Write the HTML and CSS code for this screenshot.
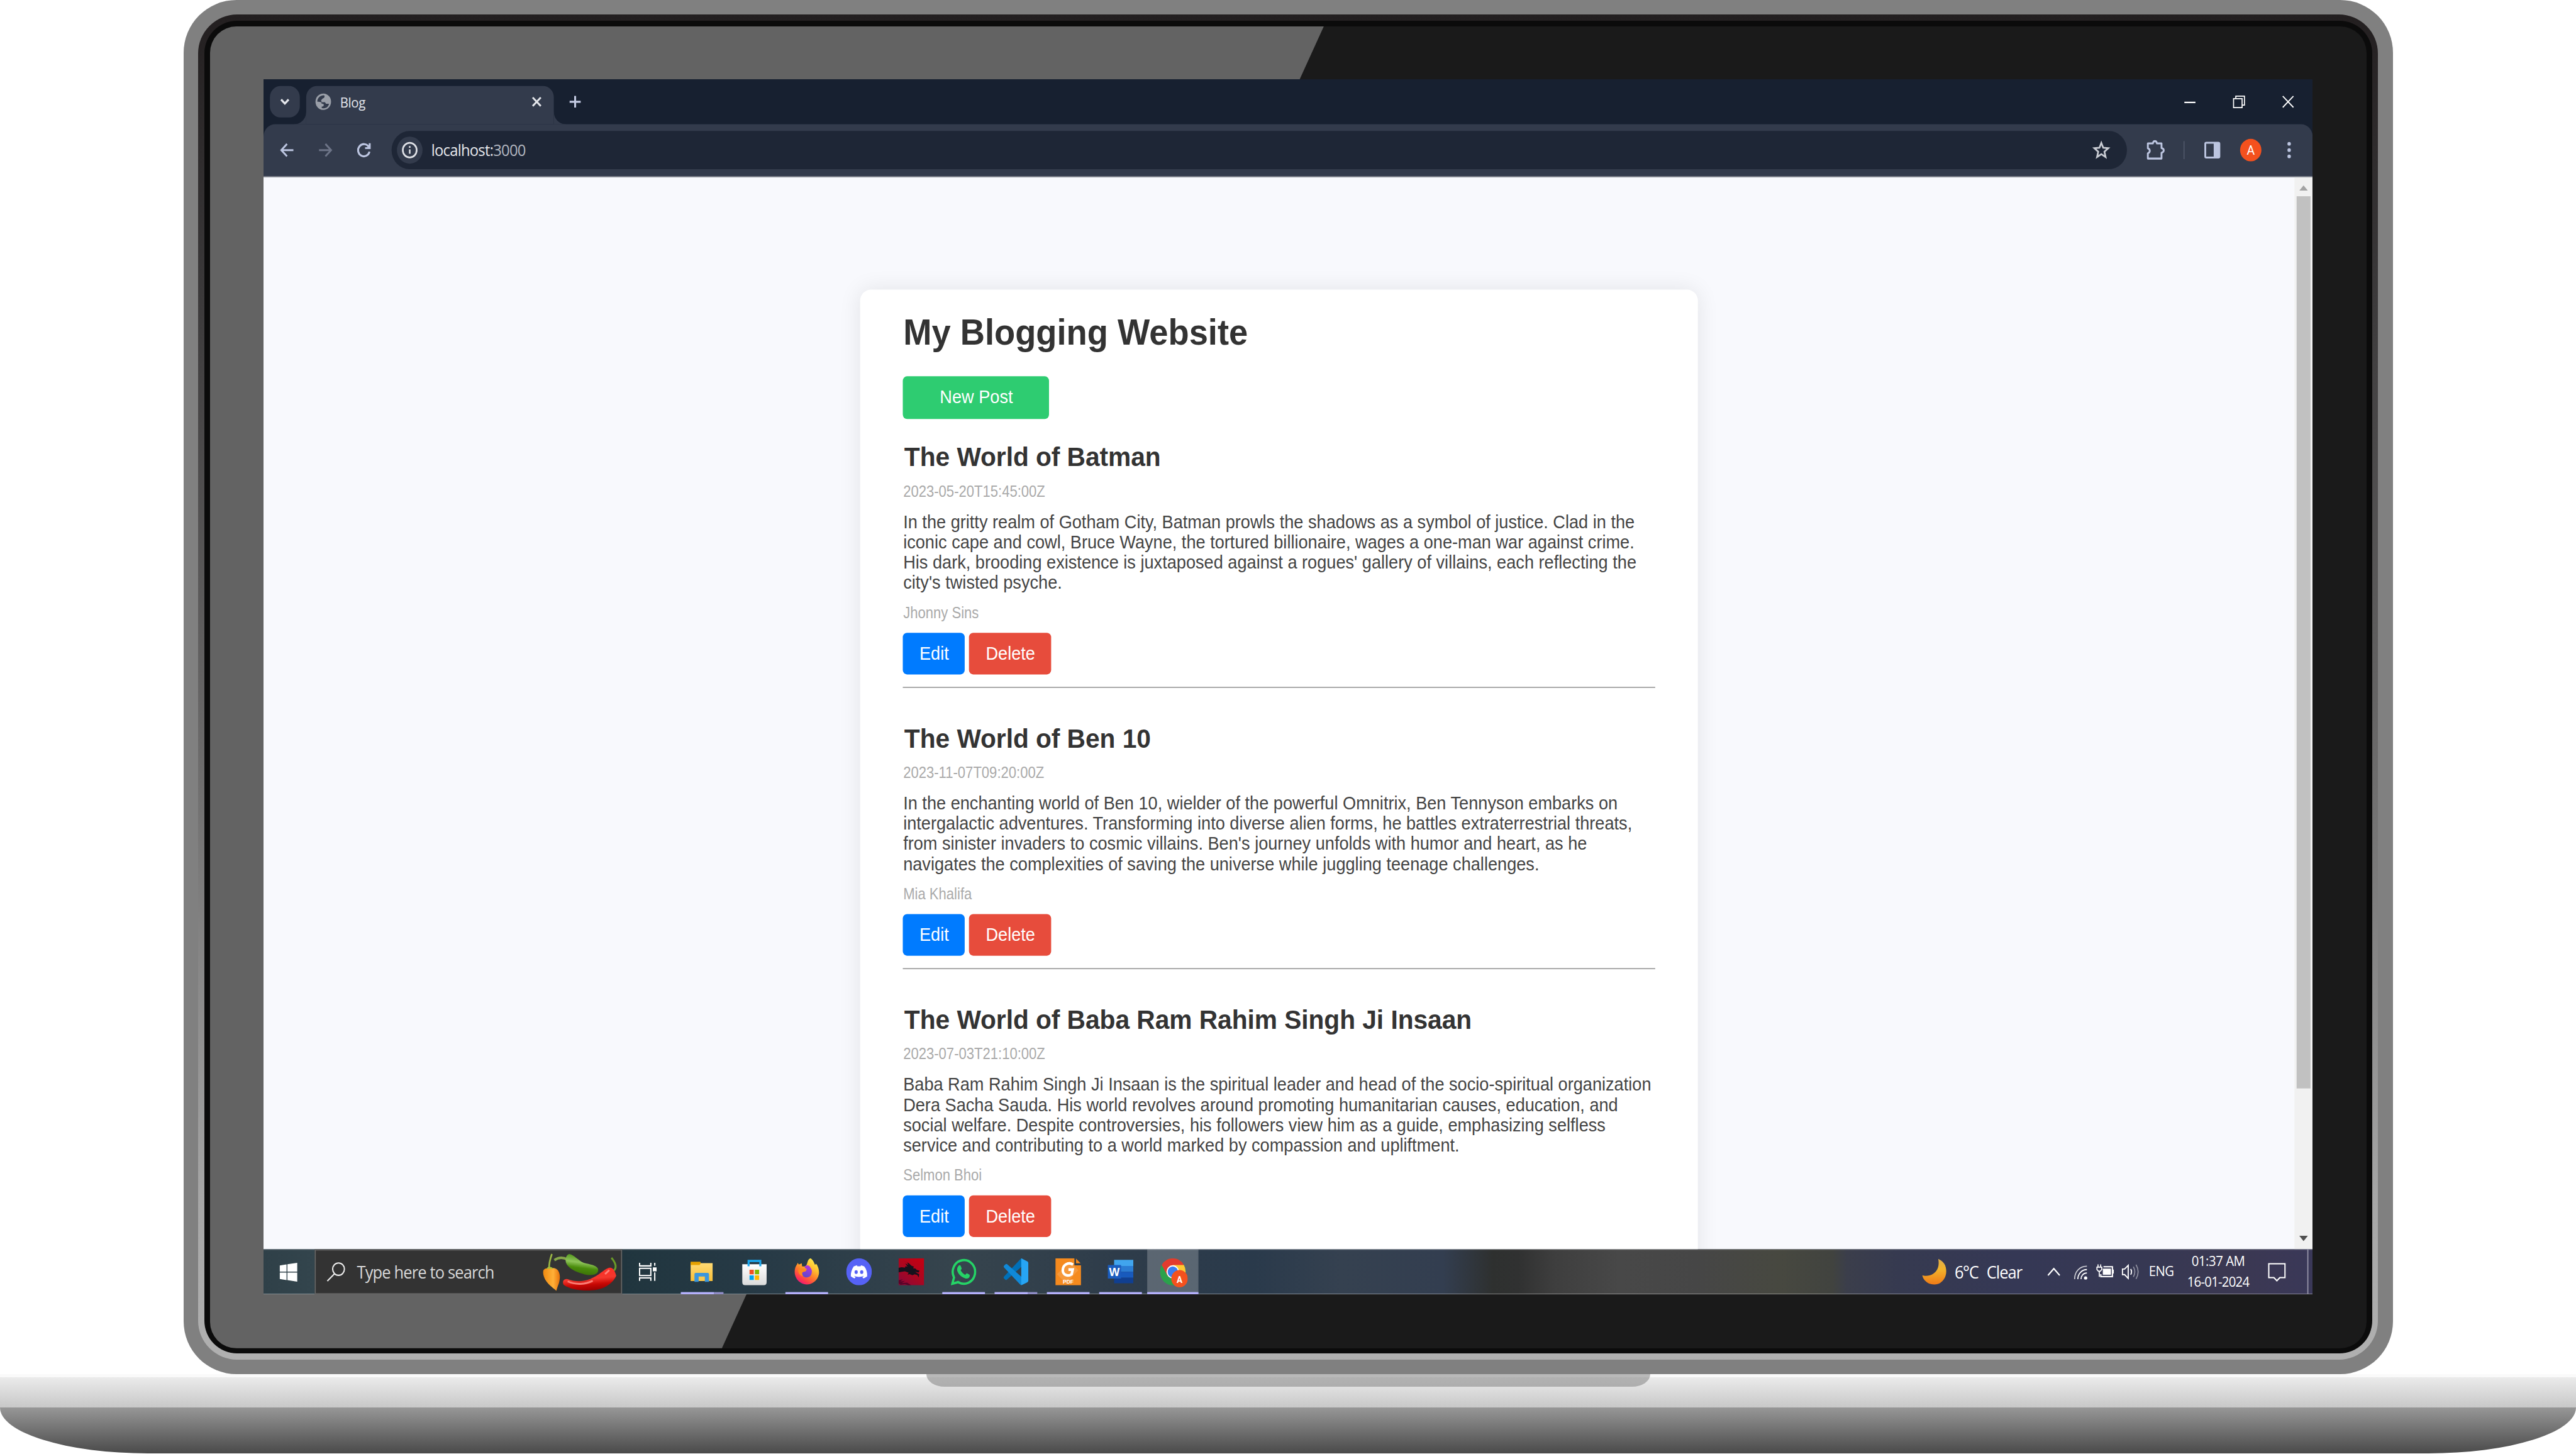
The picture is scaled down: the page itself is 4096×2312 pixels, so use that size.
FILE: index.html
```html
<!DOCTYPE html>
<html lang="en">
<head>
<meta charset="utf-8">
<title>Blog</title>
<link rel="stylesheet" href="styles.css">
</head>
<body>
<div class="laptop">
  <div class="lid"><div class="rim"><div class="bezel"><div class="glass">
    <div class="screen"><div class="desktop">

      <header class="tabstrip">
        <button class="tab-search"><svg width="28" height="28" viewBox="0 0 28 28"><path d="M10.500 12l3.500 3.600 3.500-3.600" fill="none" stroke="#e3e5ea" stroke-width="1.900"/></svg></button>
        <div class="tab">
          <svg class="globe" width="16" height="16" viewBox="0 0 16 16"><circle cx="8" cy="8" r="7.300" fill="#9a9fa8"/><path d="M8.800 2.200C5.500 2 2.600 4.500 2.300 7.800L5.400 8.200C6.800 8.300 6.600 7.300 5.600 6.500 7 6.500 6.600 5.200 8 4.900 9.300 4.300 9.500 3 8.800 2.200ZM5.800 8.400H9.300C10.200 8.400 9.900 9.800 11 9.800H13.300C13 12 11.300 13.700 8.300 13.900L6.600 13.700 6.500 12.300C8 12.500 8.800 11.300 8.400 10.200 7.600 9.900 6 9.700 5.800 8.400Z" fill="#333b4c"/></svg>
          <span class="tab-title">Blog</span>
          <svg class="tab-close" width="10" height="10" viewBox="0 0 10 10"><path d="M1.200 1.200l7.600 7.600M8.800 1.200L1.200 8.800" stroke="#e3e5ea" stroke-width="1.700"/></svg>
        </div>
        <svg class="new-tab" width="12" height="12" viewBox="0 0 12 12"><path d="M6 .8v10.400M.8 6h10.400" stroke="#c3cae2" stroke-width="1.800"/></svg>
        <div class="window-controls">
          <svg width="12" height="12" viewBox="0 0 12 12"><path d="M.8 6.600h10.400" stroke="#fff" stroke-width="1.200"/></svg>
          <svg width="12" height="12" viewBox="0 0 12 12"><path d="M.9 3.200h8v8h-8zM3 3V1h8.100v8H9" fill="none" stroke="#fff" stroke-width="1"/></svg>
          <svg width="12" height="12" viewBox="0 0 12 12"><path d="M1 1l10 10M11 1L1 11" stroke="#fff" stroke-width="1.100"/></svg>
        </div>
      </header>

      <nav class="toolbar">
        <svg class="nav-icon" width="16" height="16" viewBox="0 0 16 16"><path d="M14 8H3M8 2.500L2.700 8 8 13.500" fill="none" stroke="#bcc5e0" stroke-width="1.700"/></svg>
        <svg class="nav-icon" width="16" height="16" viewBox="0 0 16 16"><path d="M2 8h11M8 2.500L13.300 8 8 13.500" fill="none" stroke="#6d7487" stroke-width="1.700"/></svg>
        <svg class="nav-icon" width="16" height="16" viewBox="0 0 16 16"><path d="M13.300 9.300A5.400 5.400 0 1 1 12.600 5.200M13.500 1.900v4.300H9.200" fill="none" stroke="#bcc5e0" stroke-width="1.800"/></svg>
        <div class="omnibox">
          <span class="site-info"><svg width="16" height="16" viewBox="0 0 16 16"><circle cx="8" cy="8" r="6.500" fill="none" stroke="#dfe1e6" stroke-width="1.600"/><path d="M8 7.300v4M8 4.400v1.500" stroke="#dfe1e6" stroke-width="1.500"/></svg></span>
          <span class="url">localhost:<span class="port">3000</span></span>
          <svg class="star" width="18" height="18" viewBox="0 0 18 18"><path d="M9 2.600l1.800 4.300 4.700.4-3.600 3.100 1.100 4.700L9 12.600l-4 2.500 1.100-4.700-3.600-3.100 4.700-.4z" fill="none" stroke="#c9ccd3" stroke-width="1.600"/></svg>
        </div>
        <svg class="puzzle" width="18" height="18" viewBox="0 0 18 18"><path d="M1.600 3h4.700q.4-2 1.900-2t1.900 2h4.300v4.200q2.100.5 2.100 2t-2.100 2.200v5.100H1.600v-4.600c2.400-1 2.400-3.700 0-4.500z" fill="none" stroke="#bcc5e0" stroke-width="1.700" stroke-linejoin="round"/></svg>
        <i class="divider"></i>
        <svg class="side-panel" width="16" height="16" viewBox="0 0 16 16"><rect x="1.400" y="1.400" width="13.200" height="13.200" rx="1" fill="none" stroke="#bcc5e0" stroke-width="1.700"/><path d="M9.300 1h5.200v14H9.300z" fill="#bcc5e0"/></svg>
        <span class="avatar">A</span>
        <svg class="menu" width="4" height="16" viewBox="0 0 4 16"><g fill="#bcc5e0"><circle cx="2" cy="2.400" r="1.600"/><circle cx="2" cy="8" r="1.600"/><circle cx="2" cy="13.600" r="1.600"/></g></svg>
      </nav>

      <div class="viewport">
        <main class="page">
          <section class="card">
            <h1>My Blogging Website</h1>
            <button class="btn new-post">New Post</button>
            <article class="post">
              <h2>The World of Batman</h2>
              <small class="date">2023-05-20T15:45:00Z</small>
              <p>In the gritty realm of Gotham City, Batman prowls the shadows as a symbol of justice. Clad in the<br>iconic cape and cowl, Bruce Wayne, the tortured billionaire, wages a one-man war against crime.<br>His dark, brooding existence is juxtaposed against a rogues' gallery of villains, each reflecting the<br>city's twisted psyche.</p>
              <small class="author">Jhonny Sins</small>
              <div class="actions"><button class="btn edit">Edit</button><button class="btn delete">Delete</button></div>
            </article>
            <article class="post">
              <h2>The World of Ben 10</h2>
              <small class="date">2023-11-07T09:20:00Z</small>
              <p>In the enchanting world of Ben 10, wielder of the powerful Omnitrix, Ben Tennyson embarks on<br>intergalactic adventures. Transforming into diverse alien forms, he battles extraterrestrial threats,<br>from sinister invaders to cosmic villains. Ben's journey unfolds with humor and heart, as he<br>navigates the complexities of saving the universe while juggling teenage challenges.</p>
              <small class="author">Mia Khalifa</small>
              <div class="actions"><button class="btn edit">Edit</button><button class="btn delete">Delete</button></div>
            </article>
            <article class="post">
              <h2>The World of Baba Ram Rahim Singh Ji Insaan</h2>
              <small class="date">2023-07-03T21:10:00Z</small>
              <p>Baba Ram Rahim Singh Ji Insaan is the spiritual leader and head of the socio-spiritual organization<br>Dera Sacha Sauda. His world revolves around promoting humanitarian causes, education, and<br>social welfare. Despite controversies, his followers view him as a guide, emphasizing selfless<br>service and contributing to a world marked by compassion and upliftment.</p>
              <small class="author">Selmon Bhoi</small>
              <div class="actions"><button class="btn edit">Edit</button><button class="btn delete">Delete</button></div>
            </article>
          </section>
        </main>
        <div class="scrollbar">
          <svg width="9" height="5" viewBox="0 0 9 5"><path d="M.5 5L4.500 .3 8.500 5z" fill="#a3a3a3"/></svg>
          <i class="thumb"></i>
          <svg class="down" width="9" height="5" viewBox="0 0 9 5"><path d="M.5 0l4 4.700L8.500 0z" fill="#505050"/></svg>
        </div>
      </div>

      <footer class="taskbar">
        <div class="start"><svg width="17" height="17" viewBox="0 0 17 17"><path d="M.2 2.400L6.600 1.400v6.400H.2zM7.400 1.300L16.600 0v7.800H7.400zM.2 8.700h6.400v6.600L.2 14.400zM7.400 8.700h9.200v8L7.400 15.400z" fill="#fff"/></svg></div>
        <div class="search">
          <svg width="18" height="18" viewBox="0 0 18 18"><circle cx="11.300" cy="6.600" r="5.500" fill="none" stroke="#eee" stroke-width="1.200"/><path d="M7.600 10.600L.8 17.200" stroke="#eee" stroke-width="1.200"/></svg>
          <span>Type here to search</span>
          <svg class="peppers" width="72" height="36" viewBox="0 0 72 36">
            <defs>
              <linearGradient id="po" x1="0" x2="1"><stop offset="0" stop-color="#f08a10"/><stop offset=".6" stop-color="#ffb038"/><stop offset="1" stop-color="#e8720a"/></linearGradient>
              <linearGradient id="pg" x1=".3" y1="0" x2=".1" y2="1"><stop offset="0" stop-color="#4f9418"/><stop offset=".35" stop-color="#8fc45a"/><stop offset=".6" stop-color="#4a8c0c"/><stop offset="1" stop-color="#386a06"/></linearGradient>
              <linearGradient id="pr" x1=".3" y1="0" x2=".5" y2="1"><stop offset="0" stop-color="#ff2a22"/><stop offset=".5" stop-color="#f4382e"/><stop offset=".75" stop-color="#c80804"/><stop offset="1" stop-color="#980000"/></linearGradient>
            </defs>
            <path d="M6.700 14.500C6.300 10 7.600 6.500 9.200 2.200" fill="none" stroke="#9ab645" stroke-width="1.600"/>
            <path d="M1.300 16.500C3 14.500 6 15 8.500 14.800 11 14.300 13.500 15 15 16.800 17.200 20 17 24 15.800 28 14.700 31 14 32.500 13.400 34.800 9 31.500 5 28.500 3 25 1.200 21.500 .6 19 1.300 16.500Z" fill="url(#po)"/>
            <path d="M4.200 15.800C4.600 14.200 5.400 14 6 13.500L8.400 13.700C9.400 14 10.400 14.800 10 15.600 8 15 6 15 4.200 15.800Z" fill="#a8bd3a"/>
            <path d="M24 7.300C20 5 16 4.800 11.500 7.600" fill="none" stroke="#86a64a" stroke-width="2.200"/>
            <path d="M25.500 2.200C30 3 34 8 39 10 45 11.500 51 12 52.500 15.500 53.500 20.500 47 21.500 41.500 20.600 33 18.500 24.500 15.500 22.300 9.500 21.600 5.500 23 2.800 25.500 2.200Z" fill="url(#pg)"/>
            <path d="M67 17C70.500 14.500 69 10 65 5.500" fill="none" stroke="#6a9a28" stroke-width="1.800"/>
            <path d="M62.500 14.500C66 13.500 68 16.500 69.500 21.500 66.500 28 58.500 34 46 34.500 37 35 26 33.500 20.200 29.500 18.500 26.500 20.500 24 24 24.500 31 26.800 38 27 45 24.400 54 21 57.500 16 62.500 14.500Z" fill="url(#pr)"/>
            <path d="M24 26.500C32 30 41 29 47.500 26M59 20l4-3.500" fill="none" stroke="#ff8f86" stroke-width="1.600" opacity=".85"/>
          </svg>
        </div>
        <div class="app task-view"><svg width="18" height="18" viewBox="0 0 18 18"><g fill="none" stroke="#fff" stroke-width="1.200"><path d="M1.400 1v2.700h10.500V1M1.400 5.900h10.500v6.400H1.400zM1.400 17v-2.600h10.500V17M15.600 1v2.600M15.600 9.500V17"/></g><path d="M13.800 5.100h3.500v3.500h-3.500z" fill="#fff"/></svg></div>
        <div class="app open multi"><svg width="24" height="24" viewBox="0 0 24 24"><defs><linearGradient id="fo" x1="0" x2="0" y1="0" y2="1"><stop offset="0" stop-color="#ffda73"/><stop offset="1" stop-color="#f6be38"/></linearGradient></defs><path d="M1.200 4.200h20.600v16H1.200z" fill="url(#fo)"/><path d="M1.200 3h9l.6 1.200-1.200 1.800H1.200z" fill="#e5a100"/><path d="M4.800 20.900v-6.800q0-1.200 1.200-1.200h11.200q1.200 0 1.200 1.200v6.800h-3.900v-4.800H8.700v4.800z" fill="#3a96dc"/><path d="M9 16.300h5.200V20H9z" fill="#f8c94f"/></svg></div>
        <div class="app"><svg width="24" height="24" viewBox="0 0 24 24"><defs><linearGradient id="st" x1="0" x2="0" y1="0" y2="1"><stop offset="0" stop-color="#fff"/><stop offset="1" stop-color="#dadada"/></linearGradient></defs><path d="M.6 5.300h22.800v15.900q0 2.800-2.800 2.800H3.400Q.6 24 .6 21.200z" fill="url(#st)"/><path d="M6.500 7V2.300h11V7" fill="none" stroke="#1ba7ee" stroke-width="1.900"/><path d="M7.400 10.200h4v4h-4z" fill="#f25022"/><path d="M12.400 10.200h4v4h-4z" fill="#7fba00"/><path d="M7.400 15.200h4v4h-4z" fill="#00a4ef"/><path d="M12.400 15.200h4v4h-4z" fill="#ffb900"/></svg></div>
        <div class="app open"><svg width="24" height="24" viewBox="0 0 24 24"><defs><linearGradient id="ff" x1=".85" y1="0" x2=".25" y2="1"><stop offset="0" stop-color="#fff44f"/><stop offset=".35" stop-color="#ffbd2f"/><stop offset=".6" stop-color="#ff7a2a"/><stop offset=".85" stop-color="#ff3350"/><stop offset="1" stop-color="#e31587"/></linearGradient><linearGradient id="fp" x1=".7" y1="0" x2=".3" y2="1"><stop offset="0" stop-color="#b833e1"/><stop offset="1" stop-color="#5b49c8"/></linearGradient></defs><path d="M15.600 0C18.200 1.800 18.800 3.800 19.600 5.600 20.600 5.300 20.900 5 20.800 4.700 23 7.500 23.800 11 23.400 13.800 22.500 19.500 17.500 23.200 12 23.200 5.500 23.200 .7 18 .7 12 .7 9 1.500 7 3 5.200L3.500 4 4.600 5.500 7.300 4.400 7.600 7C9 7.200 9.500 7.300 10.500 7 11.800 6.600 12.300 5 12.600 3.500 13.200 1.500 14.300 .5 15.600 0Z" fill="url(#ff)"/><path d="M10.500 6.900C12 5.700 15 6.200 15.500 8.500 17.300 10 17.300 14 15 16 12.500 17.800 8.500 17 7.600 14 7.200 12 9 11.800 11 11.500L12 9.500 10 8.500Z" fill="url(#fp)"/><path d="M4 10C6.500 8.300 10 9.500 12 9.700 11.400 11.500 9.500 11.800 8 12.400 7.300 13.500 8 15 8.600 16 5.500 15.500 3.800 13 4 10Z" fill="#ff8a1e"/></svg></div>
        <div class="app"><svg width="24" height="24" viewBox="0 0 24 24"><circle cx="12" cy="12" r="12" fill="#5662f6"/><path d="M16.900 7.200a12 12 0 0 0-3-1l-.5.900a11 11 0 0 0-2.900 0L10 6.200a12 12 0 0 0-3 1C4.900 10.200 4.200 13.100 4.300 16c1.300.9 2.400 1.400 3.600 1.800l.9-1.300-1.300-.6.300-.3c2.600 1.200 5.700 1.200 8.300 0l.3.300-1.300.6.900 1.300c1.200-.4 2.400-.9 3.600-1.800.3-3.300-.6-6.200-2.700-8.800z" fill="#fff"/><ellipse cx="9.300" cy="12.200" rx="1.500" ry="1.700" fill="#5662f6"/><ellipse cx="14.500" cy="12.200" rx="1.500" ry="1.700" fill="#5662f6"/></svg></div>
        <div class="app"><svg width="24" height="24" viewBox="0 0 24 24"><defs><linearGradient id="dr" x1=".8" y1="0" x2=".1" y2="1"><stop offset="0" stop-color="#c40012"/><stop offset=".5" stop-color="#aa0720"/><stop offset="1" stop-color="#8a0738"/></linearGradient></defs><path d="M0 0h24v24H0z" fill="url(#dr)"/><path d="M0 8.500L3 7.900 6 8.300 6.500 7 8.500 7.300 6.200 4.500 9.300 6 8 3.500 4.500 2.200 9.500 4.200 12 6.500 14.500 7.500 13.500 8.700 16 9.200 17 10.300 19.700 11 18.800 12.600 15.500 11.800 17.500 13.200 19.300 14 18.900 17 17.500 14.700 15 14.200 13 15 10.500 14 8.500 14.500 9.500 12.800 6 11.600 3 12 0 12.500Z" fill="#15121c"/><path d="M0 19.500L4 18.600 1.500 20.600 6 20 3 22 8 21.600 12 24H9L6 22.800 2 23.500 0 22z" fill="#5a0328"/></svg></div>
        <div class="app open"><svg width="24" height="24" viewBox="0 0 24 24"><path d="M1.400 22.600L3 17A10.500 10.500 0 1 1 6.900 21.100z" fill="none" stroke="#25d366" stroke-width="2.100"/><path d="M7.400 6.500c.6-.6 1.500-.5 1.800.2l.9 2.100c.2.500-.2 1-.9 1.800.9 1.800 2.400 3.200 4.300 4.100.7-.9 1.200-1.500 1.700-1.300l2.200 1.100c.5.300.4 1.500-.1 2.300-.8 1-2.300 1.400-3.800 1-4-1.100-6.500-3.800-7.500-6.800-.4-1.700.3-3.500 1.400-4.500z" fill="#25d366"/></svg></div>
        <div class="app open multi"><svg width="24" height="24" viewBox="0 0 24 24"><path d="M17 0L.9 16.200C.3 16.800.4 17.500.9 18L2 19c.5.400 1 .4 1.500 0L19 6z" fill="#0070b8"/><path d="M.9 6.500L2.300 5.200c.5-.4 1-.4 1.500 0L19 18l-2 6q-.6-.2-1-.7L.9 8.200Q.2 7.300.9 6.500z" fill="#1089d8"/><path d="M17 0l5.700 2.700q.9.500.9 1.500v15.600q0 1-.9 1.500L17 24z" fill="#27a5f4"/></svg></div>
        <div class="app open"><svg width="24" height="24" viewBox="0 0 24 24"><path d="M0 0h17.800v6.200H24V24H0z" fill="#f58a1e"/><path d="M19.300.2L23.600 4.400h-4.300z" fill="#f58a1e"/><path d="M1.500 14L13.500 2.500 21.500 10.500 9.800 22.500z" fill="#fff" opacity=".13"/><path d="M16.500 5.600C12.500 3 7 5.500 6.900 10.500c0 4.200 4.500 6 8.300 3.700l1-4.200h-4" fill="none" stroke="#fff" stroke-width="2.400"/><text x="7" y="22.400" class="pdf-label">PDF</text></svg></div>
        <div class="app open"><svg width="24" height="24" viewBox="0 0 24 24"><path d="M6 1.300h18v5.500H6z" fill="#41a5ee"/><path d="M6 6.800h18V12H6z" fill="#2b7cd3"/><path d="M6 12h18v5.200H6z" fill="#185abd"/><path d="M6 17.200h18v5H6z" fill="#103f91"/><path d="M0 6h12.500v12H0z" fill="#1b5cbe"/><text x="1.300" y="16" class="word-label">W</text></svg></div>
        <div class="app open active"><svg width="26" height="26" viewBox="0 0 26 26"><circle cx="12" cy="12" r="12" fill="#2ba24c"/><path d="M12 12L1.600 6A12 12 0 0 1 22.400 6z" fill="#e33b2e"/><path d="M1.600 6L7.400 16 12 6z" fill="#e33b2e"/><path d="M12 6h10.400A12 12 0 0 1 14 23.800L17 14z" fill="#fcc934"/><circle cx="12" cy="12" r="5.900" fill="#fff"/><circle cx="12" cy="12" r="4.800" fill="#3b7df0"/><circle cx="18.300" cy="18.100" r="7.700" fill="#f4511e"/><text x="15.600" y="21.600" class="badge-label">A</text></svg></div>

        <div class="tray">
          <svg class="moon" width="24" height="24" viewBox="0 0 24 24"><defs><linearGradient id="mo" x1="0" x2="0" y1="0" y2="1"><stop offset="0" stop-color="#dfae4c"/><stop offset=".4" stop-color="#f2b42c"/><stop offset="1" stop-color="#f07a16"/></linearGradient></defs><path d="M15.200.5C20.500 2.800 22.700 6.500 22.700 11.500 22.700 18 17.800 23.300 11.600 23.300 6 23.300 1 19.800.3 15 2 15.800 4.600 15.800 7 15.200 13.500 13.500 16.800 8 15.200.5Z" fill="url(#mo)"/></svg>
          <span class="temp">6°C</span><span class="sky">Clear</span>
          <svg class="caret" width="13" height="8" viewBox="0 0 13 8"><path d="M1 7.200L6.500 1.200 12 7.200" fill="none" stroke="#fff" stroke-width="1.300"/></svg>
          <svg class="wifi" width="13" height="13" viewBox="0 0 13 13"><g fill="none" stroke="#fff" stroke-width="1"><path d="M1 12.500C1 6 5.500 1 12.500 1" opacity=".75"/><path d="M4 12.500C4 8 7.500 4 12.500 4"/><path d="M7 12.500C7 9.500 9 7 12.500 7"/></g><circle cx="11.300" cy="11.500" r="1.500" fill="#fff"/></svg>
          <svg class="battery" width="17" height="13" viewBox="0 0 17 13"><path d="M7 2.500h8.400v8.700H4.500V9" fill="none" stroke="#fff" stroke-width="1.200"/><path d="M6.400 4.200h7.600v5.400H6.400z" fill="#fff"/><path d="M15.500 5h1.200v3.500h-1.200zM1.400.4h1v2.200h-1zM3.900.4h1v2.200h-1z" fill="#fff"/><path d="M.9 2.800h4.500V5L4 6.500H2.300L.9 5zM3.100 6.400v5" fill="none" stroke="#fff" stroke-width="1"/></svg>
          <svg class="speaker" width="17" height="14" viewBox="0 0 17 14"><path d="M.8 4.500h2L6.200 1.200v11.600L2.800 9.500h-2z" fill="none" stroke="#fff" stroke-width="1.100"/><path d="M8.500 4.500q1.600 2.500 0 5" fill="none" stroke="#fff" stroke-width="1.100"/><path d="M11 2.500q2.800 4.500 0 9M13.500.7q4 6.300 0 12.600" fill="none" stroke="#fff" opacity=".45"/></svg>
          <span class="lang">ENG</span>
          <div class="clock"><span>01:37 AM</span><span class="day">16-01-2024</span></div>
          <svg class="notes" width="17" height="17" viewBox="0 0 17 17"><path d="M.9.8h15.200v12.300h-4.800L8.500 15.900 5.700 13.100H.9z" fill="none" stroke="#fff" stroke-width="1.200"/></svg>
          <i class="show-desktop"></i>
        </div>
      </footer>

    </div></div>
  </div></div></div></div>
  <div class="base">
    <div class="deck"><div class="notch"></div></div>
    <div class="belly"></div>
  </div>
</div>
</body>
</html>
```
FILE: styles.css
```css
* { box-sizing: border-box; }
body { margin: 0; background: #fff; overflow: hidden; }
svg { display: block; flex: none; }
button { border: 0; padding: 0; margin: 0; }

/* ---- laptop body ---- */
.laptop { width: 4096px; height: 2312px; display: flex; flex-direction: column; align-items: center; }
.lid { width: 3512.700px; height: 2185px; margin-left: 0.500px; flex: none; padding: 23px 23.300px 22.700px; background: #808080; border-radius: 84px; }
.rim { height: 100%; padding: 10px 9.300px; border-radius: 62px; background: linear-gradient(#231f20, #3a3839 20%, #6b6a6a 55%, #a6a6a6 88%, #b0b0b0); }
.bezel { height: 100%; padding: 9px 9.400px 8.500px; border-radius: 52px; background: #0b0b0b; }
.glass { height: 100%; padding: 84px 0 0 84.700px; border-radius: 42px; background: #1a1a1a; position: relative; overflow: hidden; }
.glass::before { content: ""; position: absolute; inset: 0; background: #636363; clip-path: polygon(0 0, 1771px 0, 814px 100%, 0 100%); }
.screen { position: relative; width: 3258.200px; height: 1932px; overflow: hidden; }
.desktop { width: 1920px; height: 1080px; transform-origin: 0 0; transform: scale(1.697, 1.789); display: flex; flex-direction: column; background: #172030; font-family: "Open Sans", "Noto Sans", sans-serif; }

.base { width: 100%; flex: 1; display: flex; flex-direction: column; }
.deck { height: 53px; background: linear-gradient(#fafafa 0 5px, #ebebeb 5px, #c8c8c8); display: flex; justify-content: center; }
.notch { width: 1151px; height: 20px; border-radius: 0 0 29px 29px / 0 0 20px 20px; background: linear-gradient(#b9b9b9 0 5px, #b2b2b2 5px, #adadad); }
.belly { height: 73px; background: linear-gradient(#979797, #4a4a4a); border-radius: 0 0 235px 235px / 0 0 73px 73px; }

/* ---- browser chrome ---- */
.tabstrip { height: 40px; flex: none; display: flex; align-items: center; padding-left: 6px; }
.tab-search { width: 28px; height: 28px; border-radius: 10px; background: #333b4c; }
.tab { position: relative; width: 232px; height: 34px; margin: 6px 0 0 6px; padding: 0 11px 5.500px 8.200px; display: flex; align-items: center; background: #333b4c; border-radius: 10px 10px 0 0; }
.tab::before, .tab::after { content: ""; position: absolute; bottom: 0; width: 11px; height: 11px; }
.tab::before { left: -11px; background: radial-gradient(circle at 0 0, transparent 10.700px, #333b4c 11.200px); }
.tab::after { right: -11px; background: radial-gradient(circle at 100% 0, transparent 10.700px, #333b4c 11.200px); }
.tab-title { margin-left: 7.500px; padding-top: .7px; font-size: 12px; line-height: 16px; letter-spacing: -.2px; color: #e3e5ea; }
.tab-close { margin-left: auto; }
.new-tab { margin-left: 14px; }
.window-controls { margin-left: auto; margin-right: 17px; display: flex; gap: 34px; }

.toolbar { height: 47px; flex: none; display: flex; align-items: center; padding-left: 14px; background: #333b4c; border-radius: 11px 11px 0 0; border-bottom: 1px solid #7d818b; }
.nav-icon { margin-right: 20px; }
.omnibox { width: 1626px; height: 34px; margin-left: -2px; padding: 0 15.500px 0 5px; border-radius: 17px; background: #1e2636; display: flex; align-items: center; }
.site-info { width: 24px; height: 24px; border-radius: 50%; background: #333b4c; display: grid; place-items: center; }
.url { margin-left: 8.200px; font-size: 14px; line-height: 20px; letter-spacing: -.43px; color: #e6e8ec; }
.port { color: #b4b8c1; }
.star { margin-left: auto; }
.puzzle { margin-left: 18px; }
.divider { width: 1.500px; height: 16px; margin-left: 16.500px; background: #4f5769; }
.side-panel { margin-left: 18px; }
.avatar { width: 20px; height: 20px; margin-left: 18px; border-radius: 50%; background: #f4511e; color: #fff; font: 11.500px/20px Roboto, sans-serif; text-align: center; }
.menu { margin-left: 24px; }

/* ---- page ---- */
.viewport { height: 953px; flex: none; display: flex; overflow: hidden; background: #f8f9fd; font-family: "Liberation Sans", Arial, sans-serif; }
.page { flex: 1; padding: 99.800px 0 0 559.400px; }
.card { width: 784.900px; height: 1100px; padding: 20.200px 40.200px 0 40px; border-radius: 10px; background: #fff; box-shadow: 0 0 20px rgba(0, 0, 0, .09); color: #333; }
h1 { margin: 0 0 20px; font-size: 32px; line-height: 37px; }
.btn { display: block; padding-top: 1px; color: #fff; font: 16px/18px "Liberation Sans", Arial, sans-serif; border-radius: 4px; }
.new-post { width: 137px; height: 38px; background: #2ecc71; }
.post { height: 219px; margin-top: 20px; display: flex; flex-direction: column; border-bottom: 1.200px solid #a0a0a0; }
.post + .post { margin-top: 31px; }
h2 { margin: 0 0 10.500px 1px; font-size: 24px; line-height: 27px; letter-spacing: -.03px; }
small { font-size: 13px; line-height: 15px; color: #aaa; transform: scaleY(1.07); transform-origin: 0 12px; }
p { margin: 10.200px 0 10.300px; font-size: 16px; line-height: 18px; color: #444; white-space: nowrap; }
.actions { display: flex; gap: 4px; margin-top: 9.800px; }
.actions .btn { height: 37px; }
.edit { width: 58px; background: #007bff; }
.delete { width: 77px; background: #e74c3c; }

.scrollbar { width: 17px; display: flex; flex-direction: column; align-items: center; padding-top: 7px; background: #f1f1f1; }
.thumb { width: 13px; height: 793px; margin-top: 5px; background: #c1c1c1; }
.down { margin-top: auto; margin-bottom: 7px; }

/* ---- taskbar ---- */
.taskbar { height: 40px; flex: none; display: flex; align-items: center; color: #fff; box-shadow: inset 0 -0.600px rgba(255, 255, 255, .4), inset 0 0.500px rgba(255, 255, 255, .25);
  background: linear-gradient(90deg, #2f4048 0, #33454d 48px, #20353e 336px, #273a46 470px, #36444d 650px, #2e3c4a 800px, #2a3a4b 929px, #354150 1010px, #333e50 1105px, #2e302f 1152px, #303131 1176px, #3e3e3e 1209px, #484848 1271px, #464646 1342px, #474840 1422px, #41433f 1470px, #3b3e4b 1484px, #363a50 1531px, #353855 1640px, #363853 1760px, #3b3852 1850px, #3a3858 1920px); }
.start { width: 48px; padding-right: .7px; display: grid; place-items: center; }
.search { width: 288px; height: 39.500px; padding: 0 2.500px 0 9.500px; display: flex; align-items: center; background: #333; border: 1px solid #666; font-size: 15px; line-height: 20px; letter-spacing: -.5px; color: #d8d8d8; }
.search span { margin-left: 11px; padding-top: .5px; }
.peppers { margin-left: auto; }
.app { position: relative; width: 48px; height: 40px; margin-right: 1px; flex: none; display: grid; place-items: center; }
.task-view { margin-right: 3px; padding-right: .5px; }
.open::after { content: ""; position: absolute; left: 4px; right: 4px; bottom: 0; height: 2px; background: #b4b0fb; }
.multi::after { background: linear-gradient(90deg, #b4b0fb 31px, #8f8cc6 31px); }
.active { background: rgba(255, 255, 255, .22); }
.active svg { margin: 1px 0 0 1px; }
.active::after { left: 0; right: 0; }
.pdf-label { font: 700 5px "Liberation Sans", sans-serif; fill: #fff; }
.word-label { font: 700 10.500px "Liberation Sans", sans-serif; fill: #fff; }
.badge-label { font: 700 8px Roboto, sans-serif; fill: #fff; }

.tray { width: 366px; height: 40px; margin-left: auto; display: flex; align-items: center; font-size: 15px; line-height: 20px; white-space: nowrap; }
.temp { width: 30px; margin-left: 6.500px; letter-spacing: -.8px; }
.sky { width: 56px; letter-spacing: -.6px; }
.wifi { margin: 1px 0 0 12px; }
.battery { margin-left: 8px; margin-top: -1px; }
.speaker { margin-left: 7px; }
.lang { width: 24px; margin-left: 9px; font-size: 12px; letter-spacing: -.35px; }
.clock { width: 58px; margin-left: 12px; padding-top: .6px; display: flex; flex-direction: column; align-items: center; font-size: 12px; line-height: 18px; letter-spacing: -.27px; }
.day { letter-spacing: -.45px; }
.notes { margin-left: 17px; }
.show-desktop { width: .7px; height: 40px; margin-left: 20px; background: #9a98ab; }
```
